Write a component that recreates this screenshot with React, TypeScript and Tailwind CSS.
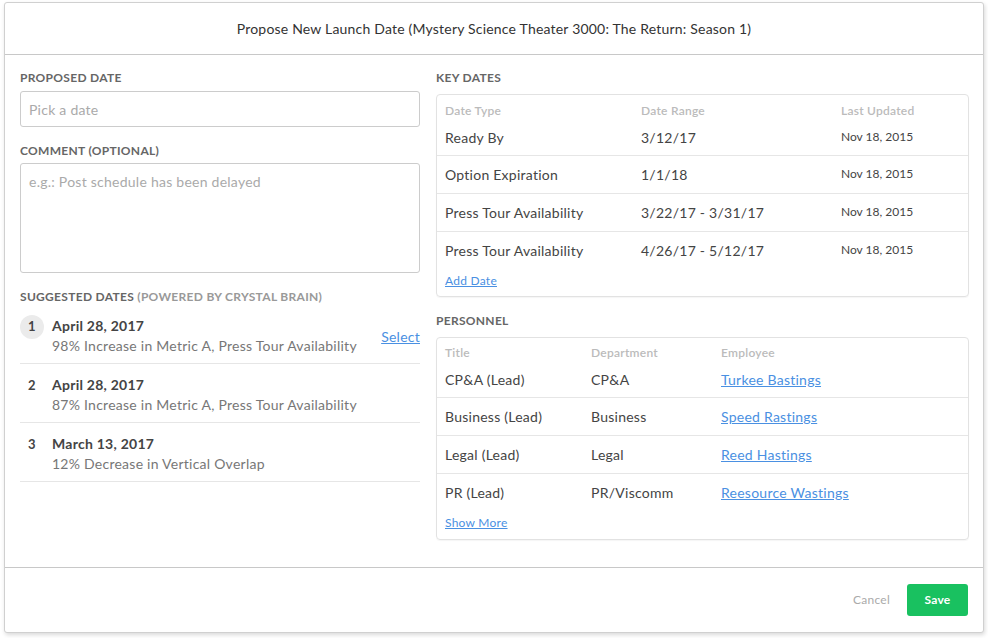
const SUGGESTED = [
  { n: 1, date: 'April 28, 2017', note: '98% Increase in Metric A, Press Tour Availability', active: true },
  { n: 2, date: 'April 28, 2017', note: '87% Increase in Metric A, Press Tour Availability', active: false },
  { n: 3, date: 'March 13, 2017', note: '12% Decrease in Vertical Overlap', active: false },
];

const KEY_DATES = [
  { type: 'Ready By', range: '3/12/17', updated: 'Nov 18, 2015' },
  { type: 'Option Expiration', range: '1/1/18', updated: 'Nov 18, 2015' },
  { type: 'Press Tour Availability', range: '3/22/17 - 3/31/17', updated: 'Nov 18, 2015' },
  { type: 'Press Tour Availability', range: '4/26/17 - 5/12/17', updated: 'Nov 18, 2015' },
];

const PERSONNEL = [
  { title: 'CP&A (Lead)', dept: 'CP&A', name: 'Turkee Bastings' },
  { title: 'Business (Lead)', dept: 'Business', name: 'Speed Rastings' },
  { title: 'Legal (Lead)', dept: 'Legal', name: 'Reed Hastings' },
  { title: 'PR (Lead)', dept: 'PR/Viscomm', name: 'Reesource Wastings' },
];

const Label = ({ children }: { children: React.ReactNode }) => (
  <div className="text-[12px] leading-[16px] font-bold uppercase text-[#666] tracking-[0.3px]">{children}</div>
);

const App = () => {
  return (
    <div className="w-[988px] h-[638px] bg-white pt-[2px] pl-[4px] font-['Lato',sans-serif] text-[#444] tracking-[0.25px]">
      <div className="w-[980px] h-[631px] border border-[#d0d0d0] rounded-[3px] bg-white shadow-[1px_2px_4px_rgba(0,0,0,0.15)] flex flex-col">
        <div className="h-[52px] shrink-0 border-b border-[#c8c8c8] flex items-center justify-center text-[14px] text-[#333] tracking-[0.2px]">
          Propose New Launch Date (Mystery Science Theater 3000: The Return: Season 1)
        </div>

        <div className="flex-1 flex gap-[16px] pl-[15px] pr-[14px] pt-[15px]">
          {/* left column */}
          <div className="w-[400px] shrink-0">
            <Label>Proposed Date</Label>
            <div className="mt-[5px] h-[36px] border border-[#ccc] rounded-[3px] px-[8px] flex items-center text-[14px] text-[#aaa]">
              Pick a date
            </div>

            <div className="mt-[16px]">
              <Label>Comment (Optional)</Label>
            </div>
            <div className="mt-[4px] h-[110px] border border-[#ccc] rounded-[3px] px-[8px] pt-[7px] text-[14px] text-[#aaa]">
              e.g.: Post schedule has been delayed
            </div>

            <div className="mt-[16px]">
              <Label>
                Suggested Dates <span className="text-[#999]">(Powered by Crystal Brain)</span>
              </Label>
            </div>
            <div>
              {SUGGESTED.map((s) => (
                <div key={s.n} className="flex items-start border-b border-[#e6e6e6] pt-[10px] pb-[6px]">
                  <div
                    className={
                      s.active
                        ? 'w-[24px] h-[24px] rounded-full bg-[#ebebeb] flex items-center justify-center text-[13px] font-bold text-[#444] shrink-0'
                        : 'w-[24px] h-[24px] rounded-full flex items-center justify-center text-[13px] font-bold text-[#444] shrink-0'
                    }
                  >
                    {s.n}
                  </div>
                  <div className="ml-[8px] flex-1 pt-[2px]">
                    <div className="text-[14px] leading-[18px] font-bold text-[#444]">{s.date}</div>
                    <div className="text-[14px] leading-[22px] text-[#777]">{s.note}</div>
                  </div>
                  {s.active && (
                    <a href="#" className="self-center text-[14px] text-[#4a90e2] underline">
                      Select
                    </a>
                  )}
                </div>
              ))}
            </div>
          </div>

          {/* right column */}
          <div className="flex-1">
            <Label>Key Dates</Label>
            <div className="mt-[8px] border border-[#e2e2e2] rounded-[4px] pt-[7px] pb-[3px] shadow-[0_1px_1px_rgba(0,0,0,0.04)]">
              <div className="grid grid-cols-[196px_200px_1fr] pl-[8px] h-[18px] items-center text-[12px] font-semibold text-[#bbb]">
                <div>Date Type</div>
                <div>Date Range</div>
                <div>Last Updated</div>
              </div>
              {KEY_DATES.map((d, i) => (
                <div
                  key={i}
                  className={
                    i === 0
                      ? 'grid grid-cols-[196px_200px_1fr] pl-[8px] h-[35px] items-center text-[14px]'
                      : 'grid grid-cols-[196px_200px_1fr] pl-[8px] h-[38px] items-center text-[14px] border-t border-[#e6e6e6]'
                  }
                >
                  <div>{d.type}</div>
                  <div>{d.range}</div>
                  <div className="text-[12px] -mt-[2px] tracking-normal">{d.updated}</div>
                </div>
              ))}
              <div className="h-[24px] pl-[8px] flex items-center">
                <a href="#" className="text-[12px] text-[#4a90e2] underline">
                  Add Date
                </a>
              </div>
            </div>

            <div className="mt-[16px]">
              <Label>Personnel</Label>
            </div>
            <div className="mt-[8px] border border-[#e2e2e2] rounded-[4px] pt-[6px] pb-[4px] shadow-[0_1px_1px_rgba(0,0,0,0.04)]">
              <div className="grid grid-cols-[146px_130px_1fr] pl-[8px] h-[18px] items-center text-[12px] font-semibold text-[#bbb]">
                <div>Title</div>
                <div>Department</div>
                <div>Employee</div>
              </div>
              {PERSONNEL.map((p, i) => (
                <div
                  key={i}
                  className={
                    i === 0
                      ? 'grid grid-cols-[146px_130px_1fr] pl-[8px] h-[35px] items-center text-[14px]'
                      : 'grid grid-cols-[146px_130px_1fr] pl-[8px] h-[38px] items-center text-[14px] border-t border-[#e6e6e6]'
                  }
                >
                  <div>{p.title}</div>
                  <div>{p.dept}</div>
                  <div>
                    <a href="#" className="text-[#4a90e2] underline -mt-[2px] inline-block">
                      {p.name}
                    </a>
                  </div>
                </div>
              ))}
              <div className="h-[24px] pl-[8px] flex items-center">
                <a href="#" className="text-[12px] text-[#4a90e2] underline">
                  Show More
                </a>
              </div>
            </div>
          </div>
        </div>

        <div className="h-[65px] shrink-0 border-t border-[#c8c8c8] flex items-center justify-end pr-[15px] gap-[17px]">
          <button className="text-[12px] text-[#aaa]">Cancel</button>
          <button className="w-[61px] h-[32px] rounded-[3px] bg-[#19c160] text-white text-[12px] font-bold">Save</button>
        </div>
      </div>
    </div>
  );
};

export default App;
